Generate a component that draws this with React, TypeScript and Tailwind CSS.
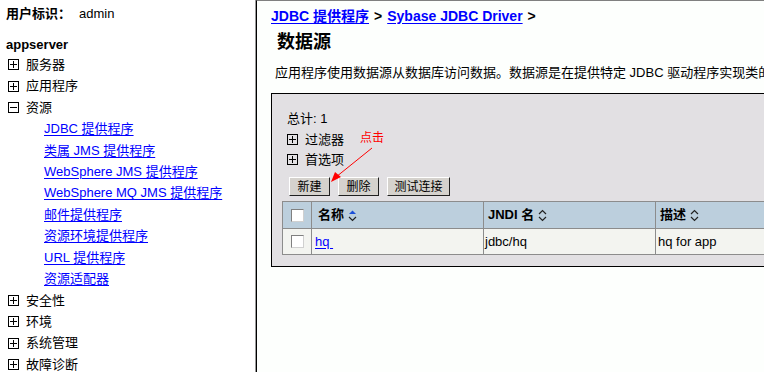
import React from "react";

const font = { fontFamily: '"Liberation Sans", "Noto Sans CJK SC", sans-serif' };

const treeTop = ["服务器", "应用程序"];
const resources = [
  "JDBC 提供程序",
  "类属 JMS 提供程序",
  "WebSphere JMS 提供程序",
  "WebSphere MQ JMS 提供程序",
  "邮件提供程序",
  "资源环境提供程序",
  "URL 提供程序",
  "资源适配器",
];
const treeBottom = ["安全性", "环境", "系统管理", "故障诊断"];

function Box({ open = false }: { open?: boolean }) {
  return (
    <svg width="11" height="11" viewBox="0 0 11 11" className="shrink-0">
      <rect x="0.5" y="0.5" width="10" height="10" fill="none" stroke="#000" />
      <line x1="2" y1="5.5" x2="9" y2="5.5" stroke="#000" />
      {!open && <line x1="5.5" y1="2" x2="5.5" y2="9" stroke="#000" />}
    </svg>
  );
}

function SortIcon({ active = false }: { active?: boolean }) {
  return (
    <svg width="9" height="13" viewBox="0 0 9 13" className="ml-1">
      {active ? (
        <polygon points="1,5 4.5,1.5 8,5" fill="#1b4fd8" />
      ) : (
        <polyline points="1,5 4.5,1.5 8,5" fill="none" stroke="#222" strokeWidth="1.2" />
      )}
      <polyline points="1,8 4.5,11.5 8,8" fill="none" stroke="#222" strokeWidth="1.2" />
    </svg>
  );
}

function Check() {
  return <div className="w-[13px] h-[13px] bg-white border border-t-[#808080] border-l-[#808080] border-b-[#d0d0d0] border-r-[#d0d0d0]" />;
}

function Btn({ children, w }: { children: React.ReactNode; w: string }) {
  return (
    <button
      className={`${w} h-[19px] bg-[#d5d2cd] text-[12px] text-black border border-t-white border-l-white border-b-[#202020] border-r-[#202020] flex items-center justify-center`}
    >
      {children}
    </button>
  );
}

export default function App() {
  return (
    <div className="w-[764px] h-[372px] flex overflow-hidden bg-white text-black" style={font}>
      {/* Navigation */}
      <div className="w-[256px] shrink-0 h-full border-r border-[#9a9a9a] bg-white pl-[6px] text-[13px] overflow-hidden">
        <div className="h-[28px] flex items-center">
          <span className="font-bold">用户标识：</span>
          <span className="ml-[8px]">admin</span>
        </div>
        <div className="h-[18px] mt-[8px] flex items-center font-bold">appserver</div>
        {treeTop.map((t) => (
          <div key={t} className="h-[21.43px] flex items-center pl-[2px]">
            <Box />
            <span className="ml-[7px]">{t}</span>
          </div>
        ))}
        <div className="h-[21.43px] flex items-center pl-[2px]">
          <Box open />
          <span className="ml-[7px]">资源</span>
        </div>
        {resources.map((t) => (
          <div key={t} className="h-[21.43px] flex items-center pl-[38px]">
            <a className="text-[#0000ff] underline underline-offset-2">{t}</a>
          </div>
        ))}
        {treeBottom.map((t) => (
          <div key={t} className="h-[21.43px] flex items-center pl-[2px]">
            <Box />
            <span className="ml-[7px]">{t}</span>
          </div>
        ))}
      </div>

      {/* Content */}
      <div className="relative flex-1 h-full border-l border-black border-t border-t-[#808080] bg-[#fdfffd] pl-[14px] overflow-hidden">
        <div className="h-[30px] flex items-center text-[14px] font-bold whitespace-nowrap">
          <a className="text-[#0000ff] underline underline-offset-2">JDBC 提供程序</a>
          <span className="mx-[5px]">&gt;</span>
          <a className="text-[#0000ff] underline underline-offset-2">Sybase JDBC Driver</a>
          <span className="ml-[5px]">&gt;</span>
        </div>
        <div className="h-[22px] flex items-center pl-[6px] text-[18px] font-bold">数据源</div>
        <div className="h-[40px] flex items-center pl-[4px] text-[13px] whitespace-nowrap">
          应用程序使用数据源从数据库访问数据。数据源是在提供特定 JDBC 驱动程序实现类的
        </div>

        <div className="w-[520px] h-[174px] bg-[#e2e0e3] border border-black pl-[15px] pt-[15px] text-[13px]">
          <div className="h-[20px] flex items-center">总计: 1</div>
          <div className="h-[21px] flex items-center">
            <Box />
            <span className="ml-[7px]">过滤器</span>
          </div>
          <div className="h-[19px] flex items-center">
            <Box />
            <span className="ml-[7px]">首选项</span>
          </div>
          <div className="flex gap-[8px] mt-[8px] ml-[2px]">
            <Btn w="w-[41px]">新建</Btn>
            <Btn w="w-[41px]">删除</Btn>
            <Btn w="w-[63px]">测试连接</Btn>
          </div>
          <table className="mt-[5px] -ml-[5px] border-collapse w-[500px] text-[13px]">
            <tbody>
              <tr className="h-[27px] bg-[#bccfdd] font-bold">
                <td className="w-[29px] border border-[#8c8c8c]">
                  <div className="flex justify-center"><Check /></div>
                </td>
                <td className="w-[172px] border border-[#8c8c8c] pl-[6px]">
                  <div className="flex items-center">名称<SortIcon active /></div>
                </td>
                <td className="w-[172px] border border-[#8c8c8c] pl-[4px]">
                  <div className="flex items-center">JNDI 名<SortIcon /></div>
                </td>
                <td className="border border-[#8c8c8c] pl-[4px]">
                  <div className="flex items-center">描述<SortIcon /></div>
                </td>
              </tr>
              <tr className="h-[26px] bg-[#f3f4f0]">
                <td className="border border-[#8c8c8c]">
                  <div className="flex justify-center"><Check /></div>
                </td>
                <td className="border border-[#8c8c8c] pl-[3px]">
                  <a className="text-[#0000ff] underline underline-offset-2">hq&nbsp;</a>
                </td>
                <td className="border border-[#8c8c8c] pl-[1px]">jdbc/hq</td>
                <td className="border border-[#8c8c8c] pl-[2px]">hq for app</td>
              </tr>
            </tbody>
          </table>
        </div>

        {/* annotation */}
        <span className="absolute left-[103px] top-[128px] text-[12px] text-[#ff0000]">点击</span>
        <svg className="absolute left-[66px] top-[140px]" width="60" height="50" viewBox="0 0 60 50">
          <line x1="49" y1="7" x2="13" y2="36" stroke="#ff0000" strokeWidth="1" />
          <polygon points="8,41 12,31 18,36" fill="#ff0000" />
        </svg>
      </div>
    </div>
  );
}
